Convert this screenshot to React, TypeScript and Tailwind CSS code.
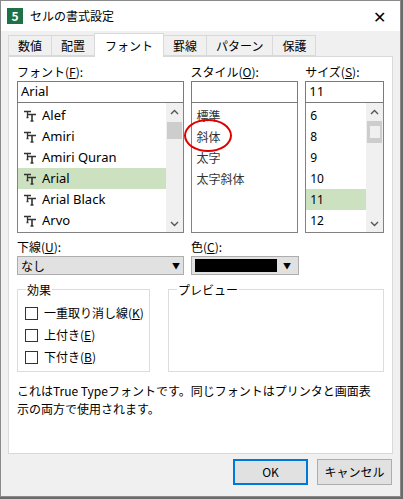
import React from 'react';

const font = { fontFamily: '"Noto Sans CJK JP", "Noto Sans", sans-serif' };

const Arrow = ({ up }: { up?: boolean }) => (
    <svg width="9" height="6" viewBox="0 0 9 6" className="text-[#555]">
        <path d={up ? 'M1 5 L4.5 1.5 L8 5' : 'M1 1 L4.5 4.5 L8 1'} fill="none" stroke="currentColor" strokeWidth="1.4" />
    </svg>
);

const Scrollbar = ({ thumbTop }: { thumbTop: number }) => (
    <div className="w-[17px] bg-[#f0f0f0] flex flex-col items-center">
        <div className="h-[17px] flex items-center justify-center"><Arrow up /></div>
        <div className="flex-1 w-full relative">
            <div className="absolute left-[1px] right-[1px] h-[17px] bg-[#cdcdcd]" style={{ top: thumbTop }} />
        </div>
        <div className="h-[17px] flex items-center justify-center"><Arrow /></div>
    </div>
);

// TrueType glyph: two overlapping T's
const TT = () => (
    <svg width="16" height="12" viewBox="0 0 16 12" className="text-[#333]">
        <path d="M1 1.5 H8 M4.5 1.5 V7.5 M3.5 7.5 H5.5" stroke="currentColor" strokeWidth="1.3" fill="none" />
        <path d="M5 4.5 H13 M9 4.5 V11 M7.5 11 H10.5" stroke="currentColor" strokeWidth="1.6" fill="none" />
    </svg>
);

const Check = ({ label, u }: { label: string; u: string }) => (
    <div className="flex items-center gap-[6px] h-[22px]">
        <div className="w-[13px] h-[13px] border border-[#333] bg-white" />
        <span>{label}(<span className="underline">{u}</span>)</span>
    </div>
);

export default function App() {
    const fonts = ['Alef', 'Amiri', 'Amiri Quran', 'Arial', 'Arial Black', 'Arvo'];
    const sizes = ['6', '8', '9', '10', '11', '12'];
    return (
        <div className="w-[403px] h-[499px] bg-[#6b6b6b] text-[12px] text-black" style={font}>
            <div className="w-[401px] h-[497px] bg-[#f0f0f0] border border-[#8a8a8a] flex flex-col">
                {/* title bar */}
                <div className="h-[30px] bg-white flex items-center pl-[6px] shrink-0">
                    <div className="w-[16px] h-[16px] bg-[#1e7145] text-white text-[12px] font-bold flex items-center justify-center leading-none">5</div>
                    <span className="ml-[7px] text-[12px]">セルの書式設定</span>
                    <span className="ml-auto mr-[14px] text-[16px] font-light leading-none">✕</span>
                </div>
                {/* tabs */}
                <div className="flex pl-[8px] pt-[4px] h-[25px] items-end shrink-0">
                    {['数値', '配置', 'フォント', '罫線', 'パターン', '保護'].map((t, i) =>
                        i === 2 ? (
                            <div key={t} className="h-[24px] px-[10px] bg-white border border-b-0 border-[#d9d9d9] flex items-center relative top-[1px] z-10 -ml-px">{t}</div>
                        ) : (
                            <div key={t} className="h-[21px] bg-[#f0f0f0] border border-[#d9d9d9] flex items-center px-[9px] -ml-px">{t}</div>
                        )
                    )}
                </div>
                {/* panel */}
                <div className="mx-[7px] h-[398px] bg-white border border-[#d9d9d9] px-[8px] pt-[6px] flex flex-col">
                    <div className="flex gap-[7px]">
                        <div className="w-[167px]">
                            <div className="h-[18px]">フォント(<span className="underline">F</span>):</div>
                            <div className="h-[22px] border border-[#7a7a7a] flex items-center px-[3px] text-[13px]" style={{ fontFamily: '"Noto Sans", sans-serif' }}>Arial</div>
                            <div className="h-[130px] border border-[#828282] border-t-0 flex">
                                <div className="flex-1 pt-[2px]">
                                    {fonts.map(f => (
                                        <div key={f} className={`h-[21px] flex items-center pl-[5px] gap-[3px] ${f === 'Arial' ? 'bg-[#cce1c0]' : ''}`}>
                                            <TT />
                                            <span className="text-[13px]" style={{ fontFamily: '"Noto Sans", sans-serif' }}>{f}</span>
                                        </div>
                                    ))}
                                </div>
                                <Scrollbar thumbTop={2} />
                            </div>
                        </div>
                        <div className="w-[108px]">
                            <div className="h-[18px]">スタイル(<span className="underline">O</span>):</div>
                            <div className="h-[22px] border border-[#7a7a7a]" />
                            <div className="h-[130px] border border-[#828282] border-t-0 pt-[2px] pl-[5px] relative">
                                {['標準', '斜体', '太字', '太字斜体'].map(s => (
                                    <div key={s} className="h-[21px] flex items-center text-[#333]">{s}</div>
                                ))}
                                <div className="absolute left-[-8px] top-[16px] w-[48px] h-[33px] border-[2.5px] border-[#e00000] rounded-[50%]" />
                            </div>
                        </div>
                        <div className="w-[79px]">
                            <div className="h-[18px]">サイズ(<span className="underline">S</span>):</div>
                            <div className="h-[22px] border border-[#7a7a7a] flex items-center px-[3px] text-[13px]" style={{ fontFamily: '"Noto Sans", sans-serif' }}>11</div>
                            <div className="h-[130px] border border-[#828282] border-t-0 flex">
                                <div className="flex-1 pt-[2px]">
                                    {sizes.map(s => (
                                        <div key={s} className={`h-[21px] flex items-center pl-[4px] text-[12px] ${s === '11' ? 'bg-[#cce1c0]' : ''}`} style={{ fontFamily: '"Noto Sans", sans-serif' }}>{s}</div>
                                    ))}
                                </div>
                                <div className="w-[17px] bg-[#f0f0f0] flex flex-col items-center">
                                    <div className="h-[17px] flex items-center justify-center"><Arrow up /></div>
                                    <div className="h-[22px] w-[15px] bg-[#cdcdcd] flex items-center justify-center mt-[1px]">
                                        <div className="w-[10px] h-[12px] bg-[#f0f0f0]" />
                                    </div>
                                    <div className="flex-1" />
                                    <div className="h-[17px] flex items-center justify-center"><Arrow /></div>
                                </div>
                            </div>
                        </div>
                    </div>
                    {/* underline / colour */}
                    <div className="flex gap-[7px] mt-[5px]">
                        <div className="w-[167px]">
                            <div className="h-[18px]">下線(<span className="underline">U</span>):</div>
                            <div className="h-[19px] bg-[#e1e1e1] border border-[#adadad] flex items-center px-[3px]">
                                なし<span className="ml-auto text-[8px]">▼</span>
                            </div>
                        </div>
                        <div className="w-[108px]">
                            <div className="h-[18px]">色(<span className="underline">C</span>):</div>
                            <div className="h-[19px] bg-[#e1e1e1] border border-[#adadad] flex items-center px-[3px] gap-[6px]">
                                <div className="w-[82px] h-[13px] bg-black" />
                                <span className="text-[8px]">▼</span>
                            </div>
                        </div>
                    </div>
                    {/* effects / preview */}
                    <div className="flex mt-[14px] gap-[18px]">
                        <div className="w-[133px] h-[83px] border border-[#dcdcdc] relative pt-[12px] pl-[7px]">
                            <span className="absolute -top-[9px] left-[8px] bg-white px-[1px]">効果</span>
                            <Check label="一重取り消し線" u="K" />
                            <Check label="上付き" u="E" />
                            <Check label="下付き" u="B" />
                        </div>
                        <div className="w-[216px] h-[83px] border border-[#dcdcdc] relative">
                            <span className="absolute -top-[9px] left-[8px] bg-white px-[1px]">プレビュー</span>
                        </div>
                    </div>
                    <p className="mt-[10px] leading-[18px] max-w-[358px]">これはTrue Typeフォントです。同じフォントはプリンタと画面表示の両方で使用されます。</p>
                </div>
                {/* buttons */}
                <div className="flex justify-end gap-[9px] pr-[8px] mt-[5px]">
                    <div className="w-[75px] h-[26px] bg-[#e1e1e1] border-2 border-[#0078d7] flex items-center justify-center">OK</div>
                    <div className="w-[75px] h-[26px] bg-[#e1e1e1] border border-[#adadad] flex items-center justify-center">キャンセル</div>
                </div>
            </div>
        </div>
    );
}
